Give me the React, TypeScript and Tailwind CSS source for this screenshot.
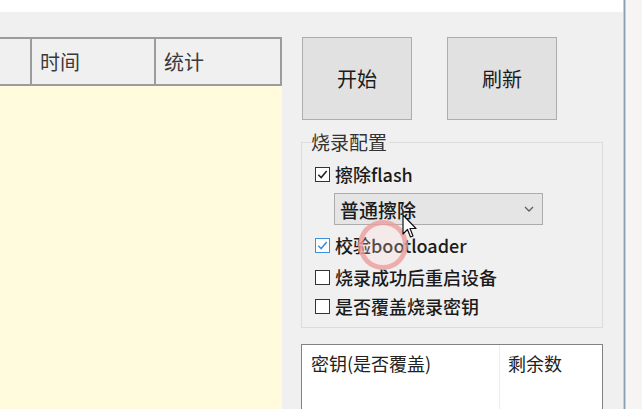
import React from 'react'

const font = { fontFamily: '"Noto Sans CJK SC", "Microsoft YaHei", sans-serif' }

function CheckBox({ checked, hover }: { checked?: boolean; hover?: boolean }) {
  return (
    <span
      className={`flex h-[15px] w-[15px] shrink-0 items-center justify-center border bg-white ${
        hover ? 'border-[#3c8fd8]' : 'border-[#333333]'
      }`}
    >
      {checked && (
        <svg width="11" height="11" viewBox="0 0 10 10">
          <path
            d="M1.2 5.2 L3.8 7.8 L8.8 1.8"
            fill="none"
            stroke={hover ? '#3c8fd8' : '#222222'}
            strokeWidth="1.4"
          />
        </svg>
      )}
    </span>
  )
}

function CheckRow({ label, checked, hover, className }: { label: string; checked?: boolean; hover?: boolean; className?: string }) {
  return (
    <div className={`flex h-[28px] shrink-0 items-center gap-[5px] pl-[13px] ${className ?? ''}`}>
      <CheckBox checked={checked} hover={hover} />
      <span className="text-[18px] font-medium leading-none text-[#1b1b1b]">{label}</span>
    </div>
  )
}

export default function App() {
  return (
    <div className="relative flex h-[409px] w-[642px] overflow-hidden bg-white" style={font}>
      {/* window */}
      <div className="flex w-[623px] flex-col">
        <div className="h-[12px] shrink-0 bg-white" />
        <div className="flex min-h-0 flex-1 overflow-hidden bg-[#f0f0f0] pt-[25px]">
          {/* log table */}
          <div className="flex w-[282px] shrink-0 flex-col">
            <div className="flex h-[49px] shrink-0 border-y-2 border-r-2 border-[#9c9c9c] bg-[#f0f0f0]">
              <div className="w-[32px] border-r-2 border-[#9c9c9c]" />
              <div className="flex w-[124px] items-center border-r-2 border-[#9c9c9c] pl-[8px] text-[20px] text-[#3a3a3a]">时间</div>
              <div className="flex flex-1 items-center pl-[8px] text-[20px] text-[#3a3a3a]">统计</div>
            </div>
            <div className="flex-1 bg-[#fffbdc]" />
          </div>

          {/* right panel */}
          <div className="ml-[19px] flex w-[302px] shrink-0 flex-col">
            <div className="flex shrink-0 gap-[35px] pl-[1px]">
              <button className="h-[83px] w-[110px] border border-[#adadad] bg-[#e1e1e1] text-[20px] text-[#1b1b1b]">开始</button>
              <button className="h-[83px] w-[110px] border border-[#adadad] bg-[#e1e1e1] text-[20px] text-[#1b1b1b]">刷新</button>
            </div>

            <div className="relative mt-[22px] flex h-[186px] shrink-0 flex-col border border-[#dcdcdc] pt-[17px]">
              <span className="absolute left-[9px] top-[-14px] bg-[#f0f0f0] pr-[2px] text-[19px] leading-[26px] text-[#333333]">烧录配置</span>
              <CheckRow label="擦除flash" checked />
              <div className="ml-[32px] mt-[5px] flex h-[32px] w-[209px] shrink-0 items-center justify-between border border-[#acacac] bg-[#e5e5e5] pl-[5px] pr-[8px]">
                <span className="text-[19px] font-medium leading-none text-[#1b1b1b]">普通擦除</span>
                <svg width="10" height="6" viewBox="0 0 10 6">
                  <path d="M1 1 L5 5 L9 1" fill="none" stroke="#606060" strokeWidth="1.3" />
                </svg>
              </div>
              <CheckRow label="校验bootloader" checked hover className="mt-[6px]" />
              <CheckRow label="烧录成功后重启设备" className="mt-[4px]" />
              <CheckRow label="是否覆盖烧录密钥" className="mt-[1px]" />
            </div>

            <div className="mt-[16px] flex h-[80px] shrink-0 border border-[#828282] bg-white">
              <div className="w-[198px] border-r border-[#ececec] pl-[9px] pt-[7px] text-[18px] leading-[22px] text-[#222222]">密钥(是否覆盖)</div>
              <div className="flex-1 pl-[8px] pt-[7px] text-[18px] leading-[22px] text-[#222222]">剩余数</div>
            </div>
          </div>
        </div>
      </div>

      {/* window border */}
      <div className="w-[3px] shrink-0 border-x border-[#b7d2ea] bg-[#8aa0b5]" />
      <div className="flex-1 bg-[#f7f4f4]" />

      {/* click indicator */}
      <div className="absolute left-[358px] top-[220px] h-[50px] w-[50px] rounded-full border-[5px] border-[#ec9a9a]/75 bg-[#ffd6d6]/25" />
      {/* cursor */}
      <svg className="absolute left-[402px] top-[214px]" width="16" height="26" viewBox="0 0 16 26">
        <path d="M1 1 L1 20 L5.5 15.5 L8.5 23 L11 22 L8 14.5 L14 14.5 Z" fill="#ffffff" stroke="#111111" strokeWidth="1.2" strokeLinejoin="round" />
      </svg>
    </div>
  )
}
